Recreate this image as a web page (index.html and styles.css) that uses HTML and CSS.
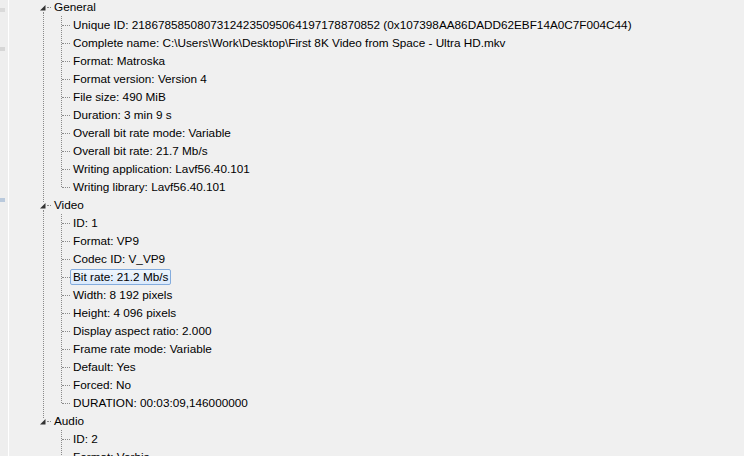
FILE: index.html
```html
<!DOCTYPE html>
<html>
<head>
<meta charset="utf-8">
<link rel="stylesheet" href="styles.css">
</head>
<body>
<div class="app">
  <div class="side">
    <i class="mark m1"></i>
    <i class="mark m2"></i>
    <i class="mark m3"></i>
  </div>
  <div class="tree">
    <div class="group more">
      <div class="head"><svg class="tri" width="6" height="6" viewBox="0 0 6 6"><polygon points="5.5,0 5.5,5.5 0,5.5" fill="#333333"/></svg><span class="stub"></span><span class="lab">General</span></div>
      <ul class="kids">
        <li><span class="lab">Unique ID: 21867858508073124235095064197178870852 (0x107398AA86DADD62EBF14A0C7F004C44)</span></li>
        <li><span class="lab">Complete name: C:\Users\Work\Desktop\First 8K Video from Space - Ultra HD.mkv</span></li>
        <li><span class="lab">Format: Matroska</span></li>
        <li><span class="lab">Format version: Version 4</span></li>
        <li><span class="lab">File size: 490 MiB</span></li>
        <li><span class="lab">Duration: 3 min 9 s</span></li>
        <li><span class="lab">Overall bit rate mode: Variable</span></li>
        <li><span class="lab">Overall bit rate: 21.7 Mb/s</span></li>
        <li><span class="lab">Writing application: Lavf56.40.101</span></li>
        <li><span class="lab">Writing library: Lavf56.40.101</span></li>
      </ul>
    </div>
    <div class="group more">
      <div class="head"><svg class="tri" width="6" height="6" viewBox="0 0 6 6"><polygon points="5.5,0 5.5,5.5 0,5.5" fill="#333333"/></svg><span class="stub"></span><span class="lab">Video</span></div>
      <ul class="kids">
        <li><span class="lab">ID: 1</span></li>
        <li><span class="lab">Format: VP9</span></li>
        <li><span class="lab">Codec ID: V_VP9</span></li>
        <li><span class="lab sel">Bit rate: 21.2 Mb/s</span></li>
        <li><span class="lab">Width: 8 192 pixels</span></li>
        <li><span class="lab">Height: 4 096 pixels</span></li>
        <li><span class="lab">Display aspect ratio: 2.000</span></li>
        <li><span class="lab">Frame rate mode: Variable</span></li>
        <li><span class="lab">Default: Yes</span></li>
        <li><span class="lab">Forced: No</span></li>
        <li><span class="lab">DURATION: 00:03:09,146000000</span></li>
      </ul>
    </div>
    <div class="group">
      <div class="head"><svg class="tri" width="6" height="6" viewBox="0 0 6 6"><polygon points="5.5,0 5.5,5.5 0,5.5" fill="#333333"/></svg><span class="stub"></span><span class="lab">Audio</span></div>
      <ul class="kids">
        <li><span class="lab">ID: 2</span></li>
        <li><span class="lab">Format: Vorbis</span></li>
      </ul>
    </div>
  </div>
</div>
</body>
</html>
```

FILE: styles.css
```css
html, body {
  margin: 0;
  padding: 0;
  background: #f0f0f0;
  overflow: hidden;
}
body {
  font-family: "Liberation Sans", Arial, sans-serif;
  font-size: 11.75px;
  line-height: 18px;
  color: #000;
}
.app {
  display: flex;
  height: 456px;
}
.side {
  flex: none;
  width: 8px;
  border-right: 1px solid #ffffff;
  background: #eeeeee;
  display: flex;
  flex-direction: column;
}
.mark {
  display: block;
  width: 5px;
  height: 4px;
}
.m1 { margin-top: 8px; background: #dadada; }
.m2 { margin-top: 35px; background: #d6d6d6; }
.m3 { margin-top: 147px; background: #b9c9dc; }
.tree {
  flex: 1;
  margin-top: -2px;
}
.group {
  position: relative;
}
.group.more::before {
  content: "";
  position: absolute;
  left: 34px;
  top: 14px;
  bottom: -6px;
  border-left: 1px dotted #8a8a8a;
}
.head {
  height: 18px;
  display: flex;
  align-items: center;
  padding-left: 31px;
}
.tri {
  flex: none;
  display: block;
  margin-top: 1px;
}
.stub {
  flex: none;
  width: 4px;
  margin-left: 1px;
  border-top: 1px dotted #8a8a8a;
}
.kids {
  list-style: none;
  margin: 0;
  padding: 0;
  position: relative;
}
.kids::before {
  content: "";
  position: absolute;
  left: 52px;
  top: 0;
  bottom: 9px;
  border-left: 1px dotted #8a8a8a;
}
.kids li {
  height: 18px;
  display: flex;
  align-items: center;
  padding-left: 61px;
  position: relative;
}
.kids li::before {
  content: "";
  position: absolute;
  left: 53px;
  top: 9px;
  width: 8px;
  border-top: 1px dotted #8a8a8a;
}
.lab {
  border: 1px solid transparent;
  border-radius: 2px;
  padding: 0 2px;
  line-height: 14px;
  white-space: nowrap;
}
.lab.sel {
  border-color: #84acdd;
  background: linear-gradient(#eef5fd, #dbeafc);
}
```
